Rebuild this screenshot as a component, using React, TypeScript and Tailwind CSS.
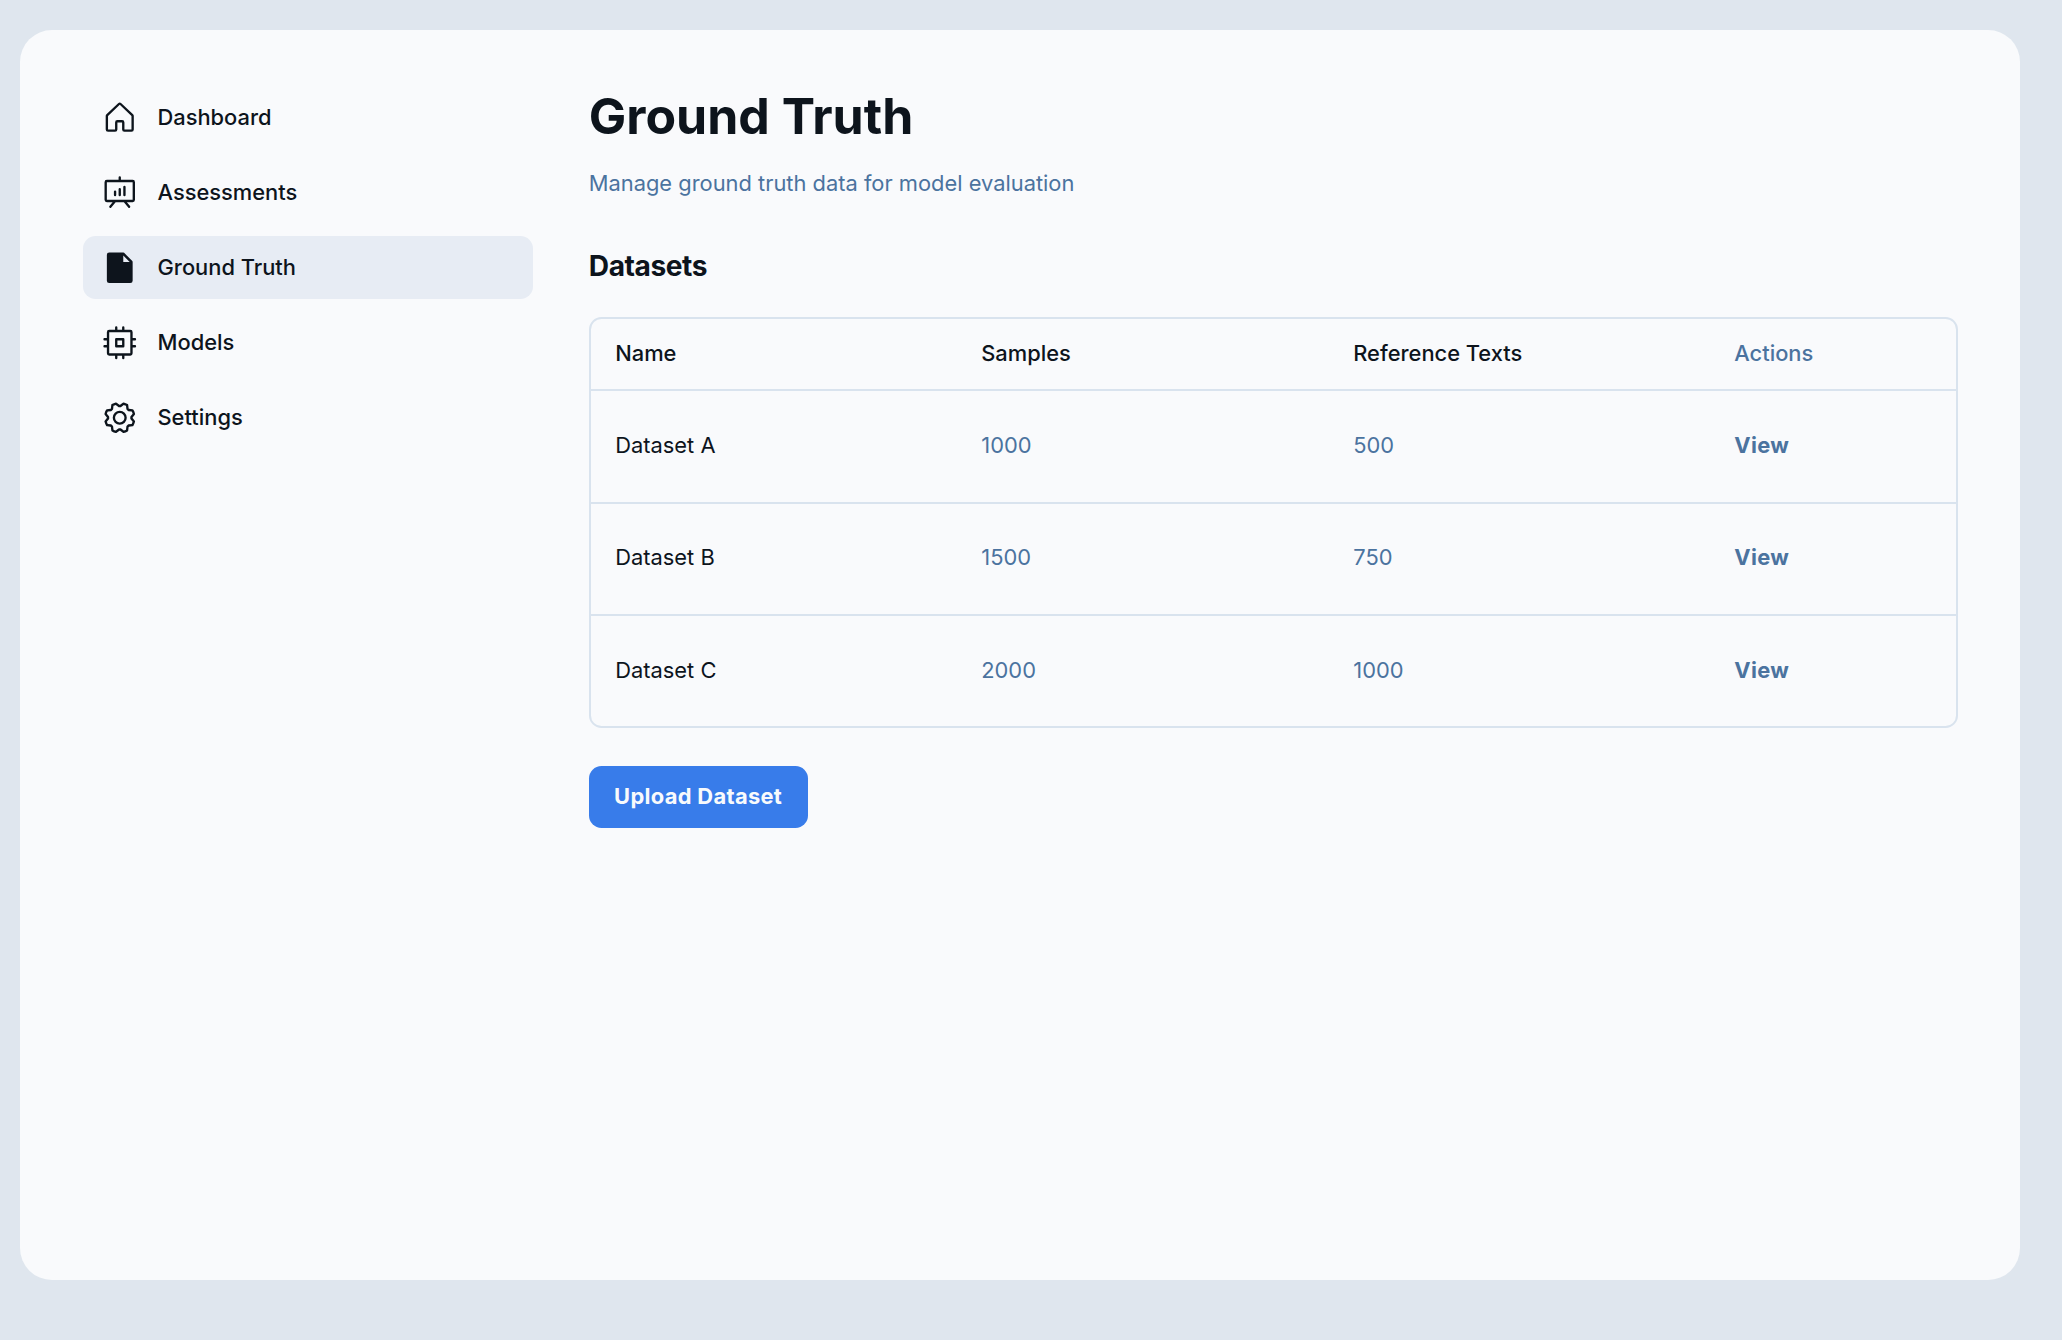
import { PiPresentationChart, PiFileFill, PiCpu, PiGear } from "react-icons/pi";
import type { ComponentType } from "react";

function HouseIcon({ className }: { className?: string }) {
  return (
    <svg viewBox="0 0 256 256" fill="currentColor" className={className}>
      <path d="M218.83,103.77l-80-75.48a1.14,1.14,0,0,1-.11-.11,16,16,0,0,0-21.53,0l-.11.11L37.17,103.77A16,16,0,0,0,32,115.55V208a16,16,0,0,0,16,16H96a16,16,0,0,0,16-16V160h32v48a16,16,0,0,0,16,16h48a16,16,0,0,0,16-16V115.55A16,16,0,0,0,218.83,103.77ZM208,208H160V160a16,16,0,0,0-16-16H112a16,16,0,0,0-16,16v48H48V115.55l.11-.1L128,40l79.9,75.43.11.1Z" />
    </svg>
  );
}

const nav: { label: string; icon: ComponentType<{ className?: string }>; active?: boolean }[] = [
  { label: "Dashboard", icon: HouseIcon },
  { label: "Assessments", icon: PiPresentationChart },
  { label: "Ground Truth", icon: PiFileFill, active: true },
  { label: "Models", icon: PiCpu },
  { label: "Settings", icon: PiGear },
];

const rows = [
  { name: "Dataset A", samples: "1000", refs: "500" },
  { name: "Dataset B", samples: "1500", refs: "750" },
  { name: "Dataset C", samples: "2000", refs: "1000" },
];

function Sidebar() {
  return (
    <nav className="flex w-[500px] shrink-0 flex-col gap-[12.5px] p-[25px]">
      {nav.map(({ label, icon: Icon, active }) => (
        <a
          key={label}
          className={`flex h-[62.5px] items-center gap-[18.75px] rounded-[12.5px] px-[18.75px] ${active ? "bg-[#e7ecf4]" : ""}`}
        >
          <Icon className="size-[37.5px]" />
          <span className="text-[21.875px] font-medium leading-[33px]">{label}</span>
        </a>
      ))}
    </nav>
  );
}

const columns = "grid grid-cols-[366px_372px_381px_1fr]";

export default function App() {
  return (
    <div className="h-[1340px] w-[2062px] bg-[#dfe6ee] pl-[20px] pt-[30px] font-['Inter',sans-serif] text-[#0d141c]">
      <div className="flex h-[1250px] w-[2000px] gap-[6.25px] rounded-[32px] bg-[#f9fafc] px-[37.5px] py-[31.25px]">
        <Sidebar />
        <main className="flex flex-1 flex-col px-[25px] pt-[24px]">
          <h1 className="text-[50px] font-bold leading-[62.5px]">Ground Truth</h1>
          <p className="mt-[18.75px] text-[21.875px] leading-[32.8px] text-[#4b739f]">
            Manage ground truth data for model evaluation
          </p>
          <h2 className="mt-[49.5px] text-[28.125px] font-bold leading-[35px] tracking-[-0.015em]">Datasets</h2>
          <div className="mt-[33.2px] h-[411.25px] rounded-[12.5px] border-2 border-[#d9e3ee] text-[21.875px]">
            <div className={`${columns} h-[70.25px] items-center pb-[1.5px] font-medium`}>
              <span className="pl-[24.5px]">Name</span>
              <span className="pl-[24.5px]">Samples</span>
              <span className="pl-[24.5px]">Reference Texts</span>
              <span className="pl-[24.5px] text-[#4b739f]">Actions</span>
            </div>
            {rows.map((r) => (
              <div key={r.name} className={`${columns} h-[112.4px] items-center border-t-2 border-[#d9e3ee] pb-[2px] text-[#4b739f]`}>
                <span className="pl-[24.5px] text-[#0d141c]">{r.name}</span>
                <span className="pl-[24.5px]">{r.samples}</span>
                <span className="pl-[24.5px]">{r.refs}</span>
                <a className="pl-[24.5px] font-bold tracking-[0.015em]">View</a>
              </div>
            ))}
          </div>
          <button className="mt-[37.5px] h-[62px] w-[218.75px] rounded-[12.5px] bg-[#387cea] text-[21.875px] font-bold tracking-[0.015em] text-slate-50">
            Upload Dataset
          </button>
        </main>
      </div>
    </div>
  );
}
